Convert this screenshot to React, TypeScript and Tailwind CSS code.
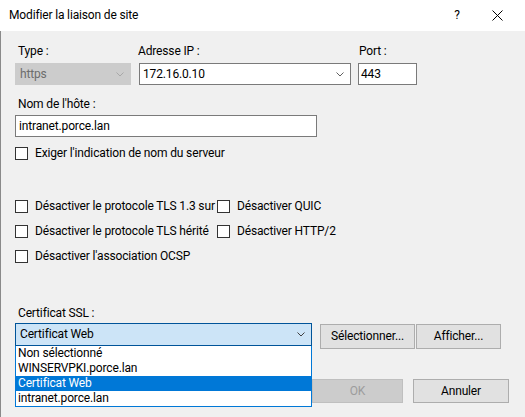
import { ReactNode } from "react";

const font = { fontFamily: 'Roboto, "Liberation Sans", Arial, sans-serif' };

function Chevron({ color = "#606060" }: { color?: string }) {
  return (
    <svg width="8" height="5" viewBox="0 0 8 5" className="shrink-0">
      <path d="M0.5 0.5 L4 4 L7.5 0.5" fill="none" stroke={color} strokeWidth="1" />
    </svg>
  );
}

function Checkbox({ children, clip }: { children: ReactNode; clip?: boolean }) {
  return (
    <div className={`flex items-center h-[15px] ${clip ? "overflow-hidden whitespace-nowrap" : ""}`}>
      <span className="w-[13px] h-[13px] border border-[#333333] bg-white shrink-0" />
      <span className="ml-[7px] whitespace-nowrap">{children}</span>
    </div>
  );
}

const certs = ["Non sélectionné", "WINSERVPKI.porce.lan", "Certificat Web", "intranet.porce.lan"];

export default function App() {
  return (
    <div
      className="w-[525px] h-[417px] bg-[#f0f0f0] text-[12px] leading-[15px] tracking-[-0.15px] text-black overflow-hidden"
      style={font}
    >
      {/* title bar */}
      <div className="h-[31px] bg-white flex items-center pl-[9px]">
        <span className="flex-1">Modifier la liaison de site</span>
        <span className="w-[20px] text-center mr-[25px]">?</span>
        <svg width="11" height="11" viewBox="0 0 11 11" className="mr-[22px]">
          <path d="M0.5 0.5 L10.5 10.5 M10.5 0.5 L0.5 10.5" stroke="#000" strokeWidth="1" />
        </svg>
      </div>

      <div className="h-[386px] border-l border-[#8a8a8a] pl-[14px] pt-[13px]">
        {/* type / ip / port */}
        <div className="flex">
          <div className="w-[116px]">
            <div className="pl-[3px]">Type :</div>
            <div className="mt-[4px] h-[22px] bg-[#cccccc] border border-[#cccccc] flex items-center pl-[4px] pr-[6px] text-[#6d6d6d]">
              <span className="flex-1">https</span>
              <Chevron color="#a8a8a8" />
            </div>
          </div>
          <div className="w-[212px] ml-[8px]">
            <div className="-ml-[1px]">Adresse IP :</div>
            <div className="mt-[4px] h-[22px] bg-white border border-[#7a7a7a] flex items-center pl-[3px] pr-[6px]">
              <span className="flex-1">172.16.0.10</span>
              <Chevron />
            </div>
          </div>
          <div className="w-[59px] ml-[7px]">
            <div className="pl-[1px]">Port :</div>
            <div className="mt-[4px] h-[22px] bg-white border border-[#7a7a7a] flex items-center pl-[2px]">443</div>
          </div>
        </div>

        {/* host name */}
        <div className="mt-[12px] pl-[3px]">Nom de l'hôte :</div>
        <div className="mt-[3px] w-[302px] h-[22px] bg-white border border-[#7a7a7a] flex items-center pl-[3px]">
          intranet.porce.lan
        </div>
        <div className="mt-[9px]">
          <Checkbox>Exiger l'indication de nom du serveur</Checkbox>
        </div>

        {/* options */}
        <div className="mt-[38px] grid grid-cols-[202px_1fr] gap-y-[10px]">
          <Checkbox clip>Désactiver le protocole TLS 1.3 sur TCP</Checkbox>
          <Checkbox>Désactiver QUIC</Checkbox>
          <Checkbox>Désactiver le protocole TLS hérité</Checkbox>
          <Checkbox>Désactiver HTTP/2</Checkbox>
          <Checkbox>Désactiver l'association OCSP</Checkbox>
        </div>

        {/* certificate */}
        <div className="mt-[42px] pl-[3px]">Certificat SSL :</div>
        <div className="mt-[2px] flex items-start">
          <div className="relative w-[297px]">
            <div className="h-[23px] bg-[#cce4f7] border border-[#005499] flex items-center pl-[4px] pr-[6px]">
              <span className="flex-1">Certificat Web</span>
              <Chevron color="#404040" />
            </div>
            <div className="absolute left-0 top-full w-[297px] bg-white border border-[#0078d7] border-t-0 z-10">
              {certs.map((c) => (
                <div
                  key={c}
                  className={`h-[15px] pl-[2px] flex items-center ${
                    c === "Certificat Web" ? "bg-[#0078d7] text-white" : ""
                  }`}
                >
                  {c}
                </div>
              ))}
            </div>
          </div>
          <button className="mt-[1px] ml-[8px] w-[95px] h-[25px] bg-[#e1e1e1] border border-[#adadad]">
            Sélectionner...
          </button>
          <button className="mt-[1px] ml-[1px] w-[85px] h-[25px] bg-[#e1e1e1] border border-[#adadad]">
            Afficher...
          </button>
        </div>

        {/* dialog buttons */}
        <div className="mt-[30px] flex pl-[297px]">
          <button className="w-[91px] h-[24px] bg-[#cccccc] border border-[#bfbfbf] text-[#9c9c9c]">OK</button>
          <button className="ml-[10px] w-[96px] h-[24px] bg-[#e1e1e1] border border-[#adadad]">Annuler</button>
        </div>
      </div>
    </div>
  );
}
